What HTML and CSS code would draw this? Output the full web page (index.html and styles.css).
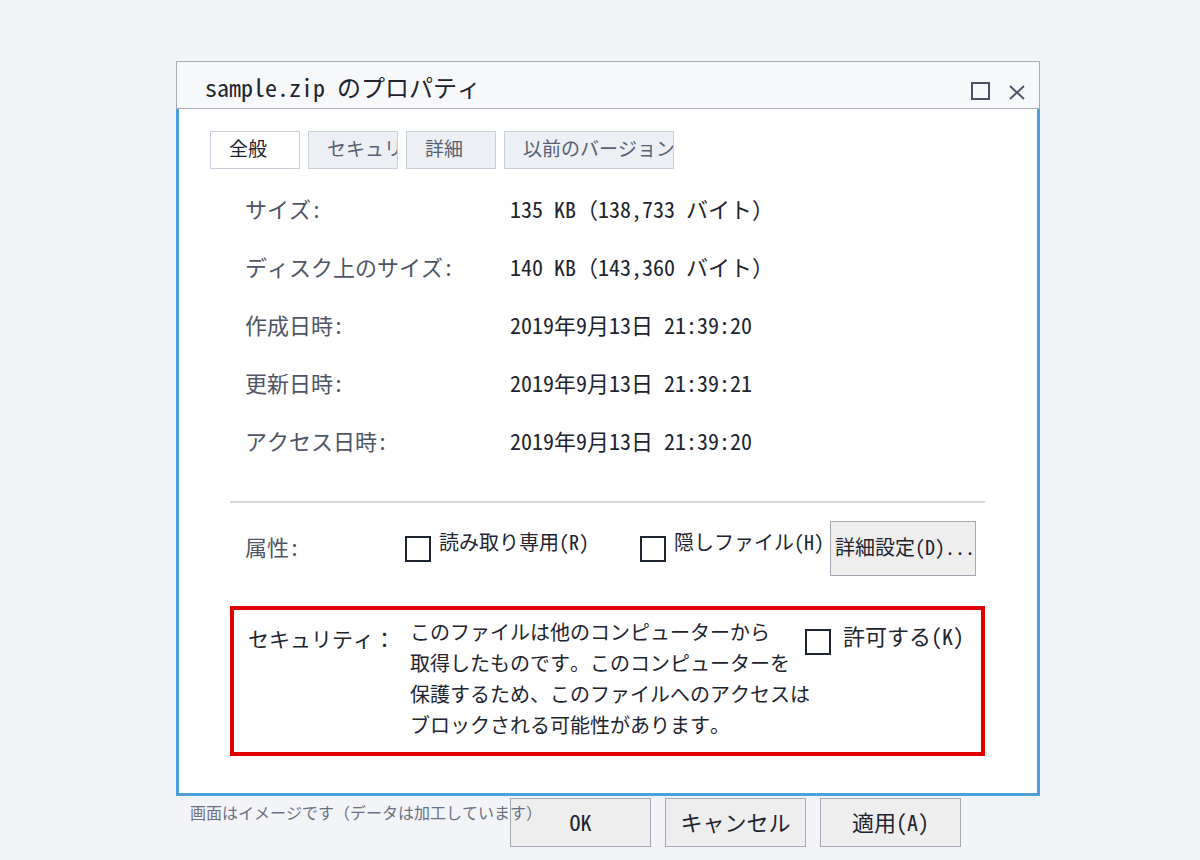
FILE: index.html
```html
<!DOCTYPE html>
<html lang="ja">
<head>
    <meta charset="UTF-8">
    <meta name="viewport" content="width=device-width, initial-scale=1.0">
    <title>sample.zip のプロパティ</title>
    <link rel="stylesheet" href="styles.css">
</head>
<body>
<div class="page">
    <div class="dialog">
        <div class="titlebar">
            <span class="title">sample.zip のプロパティ</span>
            <div class="win-btns">
                <svg class="win-icon" width="20" height="19" viewBox="0 0 20 19">
                    <rect x="1" y="1" width="17" height="16" fill="none" stroke="#4a5162" stroke-width="2"/>
                </svg>
                <svg class="win-icon win-close" width="16" height="15" viewBox="0 0 16 15">
                    <path d="M1 1 L15 14 M15 1 L1 14" fill="none" stroke="#4a5162" stroke-width="1.8"/>
                </svg>
            </div>
        </div>

        <div class="panel">
            <div class="tabs">
                <div class="tab active">全般</div>
                <div class="tab">セキュリティ</div>
                <div class="tab">詳細</div>
                <div class="tab wide">以前のバージョン</div>
            </div>

            <div class="props">
                <div class="row"><span class="key">サイズ:</span><span class="val">135 KB（138,733 バイト）</span></div>
                <div class="row"><span class="key">ディスク上のサイズ:</span><span class="val">140 KB（143,360 バイト）</span></div>
                <div class="row"><span class="key">作成日時:</span><span class="val">2019年9月13日 21:39:20</span></div>
                <div class="row"><span class="key">更新日時:</span><span class="val">2019年9月13日 21:39:21</span></div>
                <div class="row"><span class="key">アクセス日時:</span><span class="val">2019年9月13日 21:39:20</span></div>
            </div>

            <div class="sep"></div>

            <div class="attrs">
                <span class="key attr-key">属性:</span>
                <label class="opt opt-ro"><span class="check"></span><span class="opt-text">読み取り専用(R)</span></label>
                <label class="opt opt-hidden"><span class="check"></span><span class="opt-text">隠しファイル(H)</span></label>
                <button class="btn btn-adv">詳細設定(D)...</button>
            </div>

            <div class="security">
                <span class="sec-key">セキュリティ：</span>
                <p class="sec-text">このファイルは他のコンピューターから<br>取得したものです。このコンピューターを<br>保護するため、このファイルへのアクセスは<br>ブロックされる可能性があります。</p>
                <span class="check sec-check"></span>
                <span class="sec-allow">許可する(K)</span>
            </div>
        </div>
    </div>

    <div class="footer">
        <div class="actions">
            <button class="btn btn-main">OK</button>
            <button class="btn btn-main">キャンセル</button>
            <button class="btn btn-main">適用(A)</button>
        </div>
        <p class="note">画面はイメージです（データは加工しています）</p>
    </div>
</div>
</body>
</html>
```

FILE: styles.css
```css
body {
    margin: 0;
    background-color: #f3f4f8;
    font-family: "Noto Sans Mono CJK JP", "Noto Sans CJK JP", "DejaVu Sans Mono", monospace;
    color: #1e2430;
}
.page {
    padding: 61px 0 0 176px;
}
.dialog {
    width: 864px;
}
.titlebar {
    box-sizing: border-box;
    height: 48px;
    display: flex;
    align-items: center;
    padding: 4px 14px 0 28px;
    background-color: #f7f8fa;
    border: 1px solid #a8adb8;
}
.title {
    flex: 1;
    font-size: 24px;
    line-height: 30px;
    color: #1e2430;
}
.win-btns {
    display: flex;
    align-items: center;
    gap: 18px;
    padding-top: 8px;
}
.win-icon {
    display: block;
}
.win-close {
    margin-top: 3px;
}
.panel {
    box-sizing: border-box;
    height: 687px;
    padding: 22px 52px 0 31px;
    background-color: #fff;
    border: 3px solid #4ca0dc;
    border-top: none;
}
.tabs {
    display: flex;
    gap: 8px;
    height: 38px;
}
.tab {
    box-sizing: border-box;
    width: 90px;
    height: 38px;
    padding: 0 0 4px 18px;
    font-size: 19px;
    line-height: 32px;
    white-space: nowrap;
    overflow: hidden;
    color: #586072;
    background-color: #eceff4;
    border: 1px solid #c9d1dd;
}
.tab.active {
    background-color: #fff;
    color: #1e2430;
}
.tab.wide {
    width: 170px;
}
.props {
    margin: 10px 0 0 35px;
}
.row {
    display: flex;
    align-items: center;
    height: 58px;
    font-size: 22px;
}
.key {
    width: 265px;
    color: #4f5566;
}
.val {
    color: #1e2430;
}
.sep {
    height: 2px;
    margin: 32px 0 0 20px;
    background-color: #d4d6dc;
}
.attrs {
    display: flex;
    align-items: center;
    height: 55px;
    margin: 18px 0 0 35px;
    font-size: 20px;
}
.attr-key {
    width: 160px;
    padding-bottom: 6px;
    font-size: 22px;
}
.opt {
    display: flex;
    align-items: flex-start;
    align-self: flex-start;
    gap: 8px;
    margin-top: 15px;
    color: #1e2430;
}
.opt-text {
    margin-top: -7px;
    line-height: 26px;
    white-space: nowrap;
}
.opt-ro {
    width: 235px;
}
.opt-hidden {
    width: 190px;
}
.check {
    display: block;
    box-sizing: border-box;
    width: 26px;
    height: 26px;
    border: 2px solid #1e2430;
    background-color: #fff;
    flex-shrink: 0;
}
.btn {
    box-sizing: border-box;
    font-family: inherit;
    color: #1e2430;
    background-color: #eeeeee;
    border: 1px solid #a3a8b3;
    padding: 0;
}
.btn-adv {
    width: 146px;
    height: 55px;
    padding: 0 0 4px 4px;
    text-align: left;
    font-size: 20px;
    white-space: nowrap;
}
.security {
    box-sizing: border-box;
    display: flex;
    align-items: flex-start;
    height: 150px;
    margin: 30px 0 0 20px;
    padding: 6px 0 0 14px;
    border: 4px solid #e00000;
    font-size: 20px;
    line-height: 31px;
}
.sec-key {
    width: 162px;
    flex-shrink: 0;
    margin-top: 7px;
    font-size: 21px;
}
.sec-text {
    width: 395px;
    flex-shrink: 0;
    margin: 0;
    white-space: nowrap;
    color: #1e2430;
}
.sec-check {
    margin-top: 13px;
}
.sec-allow {
    margin: 4px 0 0 12px;
    font-size: 22px;
}
.footer {
    display: grid;
    width: 864px;
    margin-top: 2px;
}
.note {
    grid-area: 1 / 1;
    align-self: start;
    margin: 3px 0 0 14px;
    font-size: 16px;
    line-height: 22px;
    color: #6b7182;
}
.actions {
    grid-area: 1 / 1;
    display: flex;
    gap: 14px;
    margin-left: 334px;
}
.btn-main {
    width: 141px;
    height: 49px;
    padding-bottom: 4px;
    font-size: 22px;
}
```
